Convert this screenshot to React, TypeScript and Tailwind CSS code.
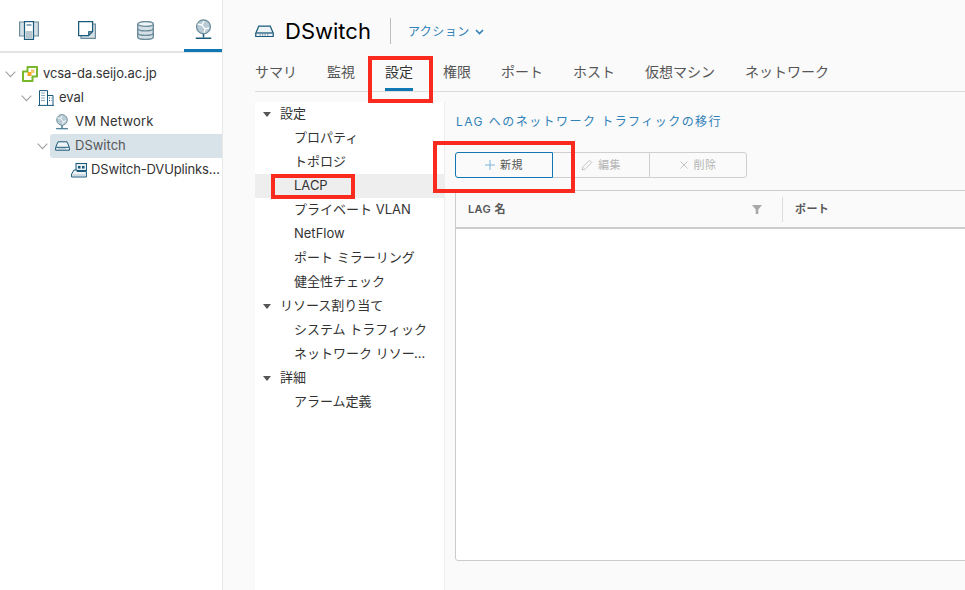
import React from 'react';

const BLUE = '#1a5a7c';
const LIGHT = '#d5e0e6';
const MID = '#6c8c9c';

function HostsIcon() {
  return (
    <svg width="20" height="19" viewBox="0 0 20 19" fill="none">
      <path d="M.6 1h6v14h-6zM13.400 1h6v14h-6z" fill={LIGHT} stroke={MID} strokeWidth="1.200" />
      <rect x="5.500" y=".6" width="9" height="17.800" fill="#fff" stroke={BLUE} strokeWidth="1.200" />
      <rect x="6.500" y="10" width="7" height="7.800" fill="#b5c6cf" />
      <path d="M7.500 4h5" stroke={BLUE} />
    </svg>
  );
}

function VmsIcon() {
  return (
    <svg width="18" height="18" viewBox="0 0 18 18" fill="none">
      <path d="M3 3h14.400v14.400H3z" fill={LIGHT} stroke={MID} strokeWidth="1.200" />
      <path d="M.6.600h14v10l-4 4H.6z" fill="#fff" stroke={BLUE} strokeWidth="1.300" />
      <path d="M10.500 14.500v-4h4z" fill={MID} stroke={BLUE} strokeWidth=".8" />
    </svg>
  );
}

function DatabaseIcon() {
  return (
    <svg width="17" height="19" viewBox="0 0 17 19" fill="none" stroke={MID} strokeWidth="1.400">
      <path d="M.7 3v13c0 1.400 3.500 2.400 7.800 2.400s7.800-1 7.800-2.400V3" fill={LIGHT} />
      <ellipse cx="8.500" cy="3" rx="7.800" ry="2.400" fill="#eef3f5" />
      <path d="M.7 7.500c0 1.400 3.500 2.400 7.800 2.400s7.800-1 7.800-2.400M.7 12c0 1.400 3.500 2.400 7.800 2.400s7.800-1 7.800-2.400" />
    </svg>
  );
}

function GlobeIcon({ size = 19 }: { size?: number }) {
  return (
    <svg width={size} height={size} viewBox="0 0 19 19" fill="none">
      <circle cx="9.500" cy="7" r="6.300" fill="#b9cbd4" stroke={MID} strokeWidth="1.100" />
      <path d="M4 4.500l4 1 3 3.500 3.500-1M8 5.500l2-3.500M11 9l-1 3.500" stroke="#fff" strokeWidth="1.100" />
      <path d="M9.500 13.500v3M2.500 17.500h14" stroke={BLUE} strokeWidth="1.400" />
    </svg>
  );
}

function SwitchIcon({ width = 15 }: { width?: number }) {
  return (
    <svg width={width} height={(width * 10) / 15} viewBox="0 0 15 10" fill="none">
      <path d="M.6 6.500L3 .8h9l2.400 5.700v2.700H.6z" fill="#eef3f5" stroke={BLUE} />
      <path d="M1 6.300h13" stroke={BLUE} />
      <path d="M3.500 7.800h8" stroke={MID} strokeDasharray="1 1" />
    </svg>
  );
}

function UplinkIcon() {
  return (
    <svg width="16" height="15" viewBox="0 0 16 15" fill="none">
      <rect x="5" y=".5" width="10.500" height="7" fill="#e7eef1" stroke={BLUE} />
      <path d="M7 3h2.500v2.500H7zM11 3h2.500v2.500H11z" fill={BLUE} />
      <path d="M.6 11L3 7h3v1.500h9.400V14H.6z" fill="#eef3f5" stroke={BLUE} />
      <path d="M2.500 12h11" stroke={MID} strokeDasharray="1 1" />
    </svg>
  );
}

function VcenterIcon() {
  return (
    <svg width="16" height="16" viewBox="0 0 16 16" fill="none">
      <path d="M5.500 1h9.500v9.500h-4.500V15H1V5.500h4.500z" fill="#fff" stroke="#76b82a" strokeWidth="2" strokeLinejoin="round" />
      <rect x="5.500" y="6" width="4" height="4" fill="#f5a623" />
      <rect x="9" y="3.500" width="3.500" height="3.500" fill="#f8c66b" />
    </svg>
  );
}

function EvalIcon() {
  return (
    <svg width="16" height="16" viewBox="0 0 16 16" fill="none" stroke={BLUE}>
      <path d="M1.500 15V.6h8V15M9.500 5.500h5.500V15M0 15.400h16" />
      <path d="M3.500 3h4M3.500 5.500h4M3.500 8h4M3.500 10.500h4M11 8h2.500M11 10.500h2.500" stroke={BLUE} strokeDasharray="1 1" />
    </svg>
  );
}

function Chevron() {
  return (
    <svg width="11" height="7" viewBox="0 0 11 7" fill="none" className="shrink-0">
      <path d="M.7.7l4.800 5 4.800-5" stroke="#a3a3a3" strokeWidth="1.200" />
    </svg>
  );
}

const sideTabs = [
  { icon: <HostsIcon />, active: false },
  { icon: <VmsIcon />, active: false },
  { icon: <DatabaseIcon />, active: false },
  { icon: <GlobeIcon size={21} />, active: true },
];

const tree = [
  { label: 'vcsa-da.seijo.ac.jp', icon: <VcenterIcon />, pad: 'pl-[5px]', open: true, track: 'tracking-[-0.1px]' },
  { label: 'eval', icon: <EvalIcon />, pad: 'pl-[21px]', open: true, track: '' },
  { label: 'VM Network', icon: <GlobeIcon size={16} />, pad: 'pl-[54px]', open: false, track: 'tracking-[0.2px]' },
  { label: 'DSwitch', icon: <SwitchIcon />, pad: 'pl-[37px]', open: true, selected: true, track: '' },
  { label: 'DSwitch-DVUplinks-28', icon: <UplinkIcon />, pad: 'pl-[71px]', open: false, track: 'tracking-[-0.15px] !ml-[4px]' },
];

const tabs = ['サマリ', '監視', '設定', '権限', 'ポート', 'ホスト', '仮想マシン', 'ネットワーク'];

const nav = [
  { label: '設定', head: true },
  { label: 'プロパティ' },
  { label: 'トポロジ' },
  { label: 'LACP', selected: true },
  { label: 'プライベート VLAN' },
  { label: 'NetFlow' },
  { label: 'ポート ミラーリング' },
  { label: '健全性チェック' },
  { label: 'リソース割り当て', head: true },
  { label: 'システム トラフィック' },
  { label: 'ネットワーク リソース プール' },
  { label: '詳細', head: true },
  { label: 'アラーム定義' },
];

export default function App() {
  return (
    <div className="relative flex h-[590px] w-[965px] overflow-hidden bg-[#fafafa] font-['Inter','Noto_Sans_CJK_JP',sans-serif] text-[13px] text-[#333]">
      {/* Inventory tree */}
      <aside className="h-full w-[223px] shrink-0 border-r border-[#e8e8e8] bg-white">
        <div className="flex h-[53px] border-b-2 border-[#e3e3e3]">
          {sideTabs.map((t, i) => (
            <div
              key={i}
              className={`flex h-[52px] shrink-0 items-center justify-center ${
                t.active ? 'ml-[10px] w-[38px] border-b-[3px] border-[#0f78b4] pt-[10px]' : 'w-[58px] pt-[8px]'
              }`}
            >
              {t.icon}
            </div>
          ))}
        </div>
        <div className="pt-[9px]">
          {tree.map((r) => (
            <div
              key={r.label}
              className={`flex h-[24px] items-center ${r.pad} ${
                r.selected ? 'ml-[50px] rounded-l-[3px] bg-[#d8e3e9] !pl-0' : ''
              }`}
            >
              {r.selected ? <span className="absolute left-[37px]"><Chevron /></span> : r.open && <Chevron />}
              <span className={`flex w-[16px] shrink-0 items-center justify-center ${r.selected ? 'ml-[4px]' : r.open ? 'ml-[6px]' : ''}`}>
                {r.icon}
              </span>
              <span className={`ml-[5px] min-w-0 truncate pr-[1px] ${r.track} ${r.selected ? 'text-[#565656]' : ''}`}>{r.label}</span>
            </div>
          ))}
        </div>
      </aside>

      {/* Main */}
      <main className="min-w-0 flex-1 pl-[32px]">
        <div className="flex h-[62px] items-center">
          <SwitchIcon width={19} />
          <h1 className="ml-[11px] text-[22px] leading-none text-black">DSwitch</h1>
          <div className="ml-[19px] h-[26px] w-px bg-[#bdbdbd]" />
          <div className="ml-[17px] flex items-center pt-px text-[12px] tracking-[0.5px] text-[#2f81b7]">
            アクション
            <svg width="9" height="6" viewBox="0 0 9 6" fill="none" className="ml-[5px]">
              <path d="M1 1l3.500 3.500L8 1" stroke="#2f81b7" strokeWidth="1.600" />
            </svg>
          </div>
        </div>

        <div className="flex h-[30px] gap-[30px] border-b border-[#dcdcdc] text-[14px] leading-[20px] text-[#565656]">
          {tabs.map((t) => (
            <div key={t} className={`h-[29px] shrink-0 ${t === '設定' ? 'border-b-[3px] border-[#0f78b4] text-[#333]' : ''}`}>
              {t}
            </div>
          ))}
        </div>

        <div className="mt-[10px] flex h-[488px]">
          {/* Settings nav */}
          <nav className="h-full w-[190px] shrink-0 border-r border-[#ededed] bg-white">
            {nav.map((n) => (
              <div
                key={n.label}
                className={`flex h-[24px] items-center ${n.head ? 'pl-[8px]' : 'pl-[39px] pr-[16px]'} ${n.selected ? 'bg-[#eeeeee]' : ''}`}
              >
                {n.head && <span className="mr-[9px] h-0 w-0 border-x-[4.500px] border-t-[5px] border-x-transparent border-t-[#555]" />}
                <span className="min-w-0 truncate">{n.label}</span>
              </div>
            ))}
          </nav>

          {/* LACP panel */}
          <section className="w-[640px] shrink-0 pl-[10px]">
            <a className="ml-px mt-[10px] block text-[12px] leading-[20px] tracking-[1.45px] text-[#2f81b7]">
              LAG へのネットワーク トラフィックの移行
            </a>
            <div className="mt-[20px] flex h-[26px] text-[11px] tracking-[0.5px]">
              <button className="flex w-[98px] items-center justify-center rounded-l-[3px] border border-[#0f78b4] text-[#565656]">
                <svg width="10" height="10" viewBox="0 0 10 10" className="mr-[5px]" fill="none">
                  <path d="M5 0v10M0 5h10" stroke="#7fb4d6" />
                </svg>
                新規
              </button>
              <button className="flex w-[96px] items-center justify-center border-y border-[#cfcfcf] text-[#b5b5b5]">
                <svg width="12" height="12" viewBox="0 0 12 12" className="mr-[5px]" fill="none">
                  <path d="M1 11l.8-3L8.500 1.300l2.200 2.200L4 10.200z" stroke="#c4c4c4" />
                </svg>
                編集
              </button>
              <button className="flex w-[98px] items-center justify-center rounded-r-[3px] border border-[#cfcfcf] text-[#b5b5b5]">
                <svg width="8" height="8" viewBox="0 0 8 8" className="mr-[6px]" fill="none">
                  <path d="M.5.500l7 7M7.500.500l-7 7" stroke="#c4c4c4" />
                </svg>
                削除
              </button>
            </div>
            <div className="mt-[12px] h-[371px] rounded-bl-[3px] border border-[#cccccc] bg-white">
              <div className="flex h-[38px] items-center border-b-2 border-[#cccccc] bg-[#fafafa] pt-px text-[11px] font-semibold tracking-[0.4px] text-[#565656]">
                <span className="ml-[12px] w-[284px]">LAG 名</span>
                <svg width="10" height="9" viewBox="0 0 10 9">
                  <path d="M0 0h10L6.300 4.500V9H3.700V4.500z" fill="#a8a8a8" />
                </svg>
                <span className="ml-[20px] h-[25px] w-px bg-[#dcdcdc]" />
                <span className="ml-[12px]">ポート</span>
              </div>
            </div>
          </section>
        </div>
      </main>

      {/* Annotation boxes */}
      <div className="absolute left-[368px] top-[56px] h-[47px] w-[65px] border-[4px] border-[#fb2a1f]" />
      <div className="absolute left-[271px] top-[174px] h-[25px] w-[84px] border-[4px] border-[#fb2a1f]" />
      <div className="absolute left-[433px] top-[141px] h-[52px] w-[142px] border-[4px] border-[#fb2a1f]" />
    </div>
  );
}
